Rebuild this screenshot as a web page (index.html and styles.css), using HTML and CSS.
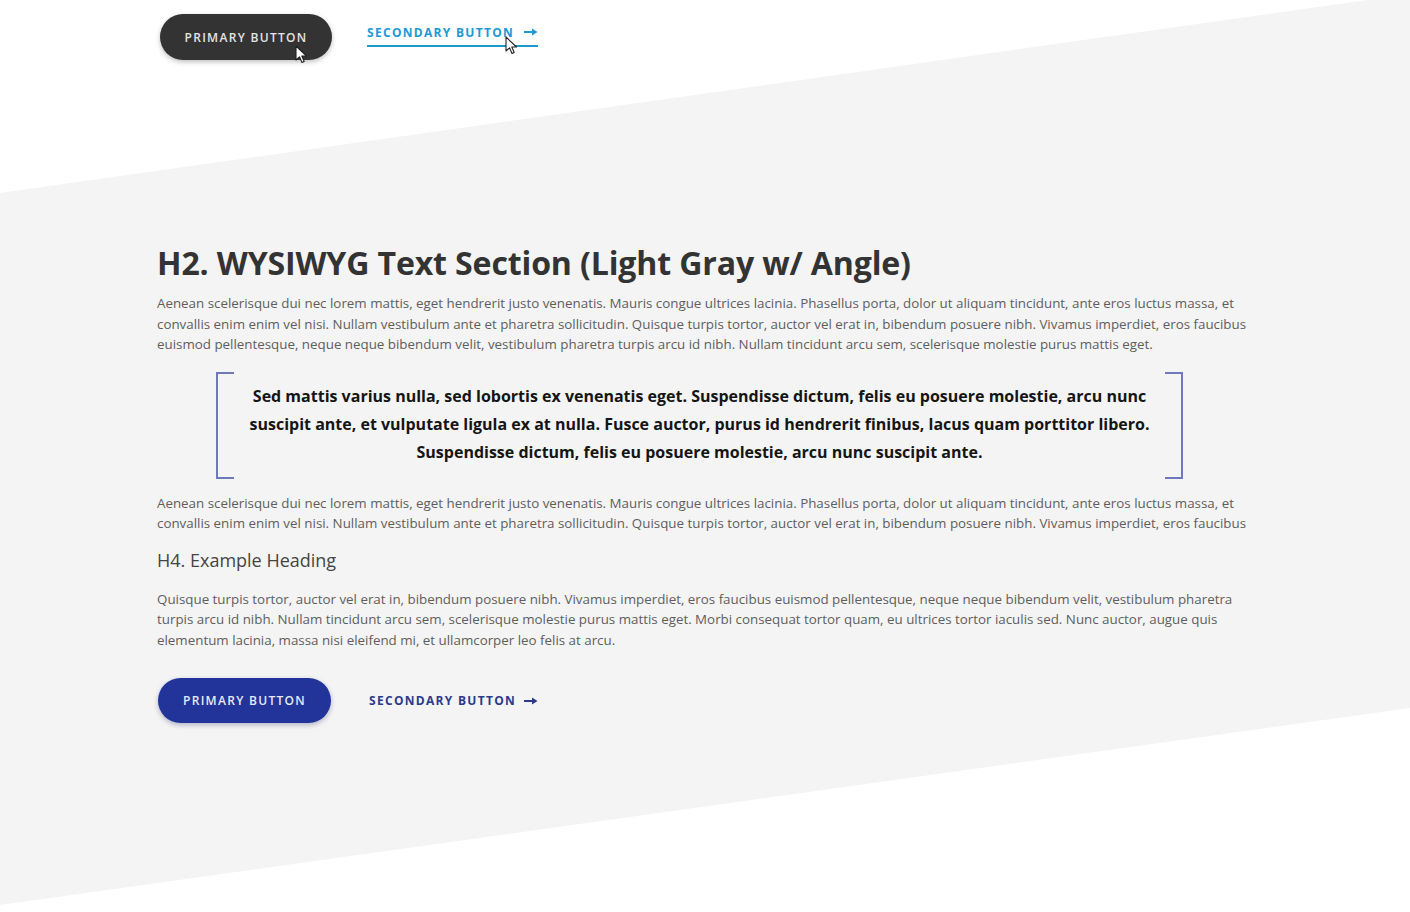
FILE: index.html
```html
<!DOCTYPE html>
<html lang="en">
<head>
<meta charset="utf-8">
<title>WYSIWYG Text Section</title>
<link rel="stylesheet" href="styles.css">
</head>
<body>
<div class="page">
  <div class="angle-bg"></div>

  <section class="top-row">
    <div class="btn-row">
      <a class="btn btn-dark" href="#">PRIMARY BUTTON
        <svg class="cursor cursor-a" width="13" height="19" viewBox="0 0 13 19"><path d="M1 1 L1 15 L4.5 11.8 L7 17.5 L9.2 16.5 L6.8 11 L11.5 11 Z" fill="#fff" stroke="#222" stroke-width="1.1" stroke-linejoin="round"/></svg>
      </a>
      <a class="link link-cyan" href="#">SECONDARY BUTTON
        <svg class="arrow" width="14" height="8" viewBox="0 0 14 8"><path d="M0 4 H9" stroke="currentColor" stroke-width="2"/><path d="M8 0.5 L13.5 4 L8 7.5 Z" fill="currentColor"/></svg>
        <svg class="cursor cursor-b" width="13" height="19" viewBox="0 0 13 19"><path d="M1 1 L1 15 L4.5 11.8 L7 17.5 L9.2 16.5 L6.8 11 L11.5 11 Z" fill="#fff" stroke="#222" stroke-width="1.1" stroke-linejoin="round"/></svg>
      </a>
    </div>
  </section>

  <section class="wysiwyg">
    <h2 class="title">H2. WYSIWYG Text Section (Light Gray w/ Angle)</h2>
    <p class="body">Aenean scelerisque dui nec lorem mattis, eget hendrerit justo venenatis. Mauris congue ultrices lacinia. Phasellus porta, dolor ut aliquam tincidunt, ante eros luctus massa, et convallis enim enim vel nisi. Nullam vestibulum ante et pharetra sollicitudin. Quisque turpis tortor, auctor vel erat in, bibendum posuere nibh. Vivamus imperdiet, eros faucibus euismod pellentesque, neque neque bibendum velit, vestibulum pharetra turpis arcu id nibh. Nullam tincidunt arcu sem, scelerisque molestie purus mattis eget.</p>

    <blockquote class="quote">
      <span class="bracket bracket-l"></span>
      <p class="quote-text">Sed mattis varius nulla, sed lobortis ex venenatis eget. Suspendisse dictum, felis eu posuere molestie, arcu nunc suscipit ante, et vulputate ligula ex at nulla. Fusce auctor, purus id hendrerit finibus, lacus quam porttitor libero. Suspendisse dictum, felis eu posuere molestie, arcu nunc suscipit ante.</p>
      <span class="bracket bracket-r"></span>
    </blockquote>

    <p class="body">Aenean scelerisque dui nec lorem mattis, eget hendrerit justo venenatis. Mauris congue ultrices lacinia. Phasellus porta, dolor ut aliquam tincidunt, ante eros luctus massa, et convallis enim enim vel nisi. Nullam vestibulum ante et pharetra sollicitudin. Quisque turpis tortor, auctor vel erat in, bibendum posuere nibh. Vivamus imperdiet, eros faucibus</p>

    <h4 class="subtitle">H4. Example Heading</h4>
    <p class="body">Quisque turpis tortor, auctor vel erat in, bibendum posuere nibh. Vivamus imperdiet, eros faucibus euismod pellentesque, neque neque bibendum velit, vestibulum pharetra turpis arcu id nibh. Nullam tincidunt arcu sem, scelerisque molestie purus mattis eget. Morbi consequat tortor quam, eu ultrices tortor iaculis sed. Nunc auctor, augue quis elementum lacinia, massa nisi eleifend mi, et ullamcorper leo felis at arcu.</p>

    <div class="btn-row btn-row-bottom">
      <a class="btn btn-navy" href="#">PRIMARY BUTTON</a>
      <a class="link link-navy" href="#">SECONDARY BUTTON
        <svg class="arrow" width="14" height="8" viewBox="0 0 14 8"><path d="M0 4 H9" stroke="currentColor" stroke-width="2"/><path d="M8 0.5 L13.5 4 L8 7.5 Z" fill="currentColor"/></svg>
      </a>
    </div>
  </section>
</div>
</body>
</html>
```

FILE: styles.css
```css
* { box-sizing: border-box; }

html, body {
  margin: 0;
  padding: 0;
  background: #ffffff;
}

body {
  font-family: "Open Sans", "Noto Sans", sans-serif;
  color: #555;
  width: 1410px;
  height: 912px;
  overflow: hidden;
}

.page {
  position: relative;
  width: 1410px;
  height: 912px;
}

.angle-bg {
  position: absolute;
  left: 0;
  top: 0;
  width: 1410px;
  height: 912px;
  background: #f4f4f4;
  clip-path: polygon(0 193px, 1410px -6px, 1410px 708px, 0 905px);
  z-index: 0;
}

.top-row, .wysiwyg {
  position: relative;
  z-index: 1;
  padding-left: 157px;
}

.top-row {
  padding-top: 14px;
  height: 200px;
}

.btn-row {
  display: flex;
  align-items: center;
  gap: 35px;
}

.btn {
  position: relative;
  display: inline-flex;
  align-items: center;
  justify-content: center;
  height: 46px;
  border-radius: 23px;
  font-size: 12px;
  font-weight: 600;
  letter-spacing: 1.3px;
  text-decoration: none;
}

.btn-dark {
  margin-left: 3px;
  width: 172px;
  background: #333333;
  color: #e4e4e4;
  box-shadow: 0 2px 5px rgba(0, 0, 0, 0.25);
}

.btn-navy {
  margin-left: 1px;
  width: 173px;
  height: 45px;
  background: #22339a;
  color: #e8eaf5;
  box-shadow: 0 2px 5px rgba(20, 30, 90, 0.3);
}

.link {
  position: relative;
  display: inline-flex;
  align-items: center;
  gap: 10px;
  font-size: 12px;
  font-weight: 700;
  letter-spacing: 1.3px;
  text-decoration: none;
}

.link .arrow {
  display: block;
}

.link-cyan {
  color: #1b9ad4;
  padding-bottom: 4px;
  border-bottom: 2px solid #1b9ad4;
  margin-top: -4px;
}

.link-navy {
  color: #2b3a8e;
  margin-left: 3px;
  gap: 8px;
}

.cursor {
  position: absolute;
}

.cursor-a { left: 135px; top: 31px; }
.cursor-b { left: 138px; top: 12px; }

.wysiwyg {
  padding-top: 43px;
  width: 1260px;
}

.title {
  margin: 0 0 10px;
  font-size: 32.1px;
  line-height: 40px;
  font-weight: 700;
  color: #333333;
  letter-spacing: -0.15px;
}

.body {
  margin: 0;
  font-size: 13.35px;
  line-height: 20.5px;
  color: #5e5e5e;
  width: 1095px;
}

.quote {
  display: flex;
  align-items: stretch;
  margin: 17px 0 14px 59px;
  width: 967px;
  height: 107px;
}

.bracket {
  flex: 0 0 18px;
  border-top: 2px solid #6f78bd;
  border-bottom: 2px solid #6f78bd;
}

.bracket-l { border-left: 2px solid #6f78bd; }
.bracket-r { border-right: 2px solid #6f78bd; }

.quote-text {
  flex: 1;
  margin: 0;
  padding: 10px 12px 0;
  text-align: center;
  font-size: 16px;
  line-height: 28px;
  font-weight: 700;
  color: #151515;
}

.subtitle {
  margin: 13px 0 16px;
  font-size: 18px;
  line-height: 26px;
  font-weight: 400;
  color: #444444;
}

.btn-row-bottom {
  margin-top: 28px;
  gap: 35px;
}
```
